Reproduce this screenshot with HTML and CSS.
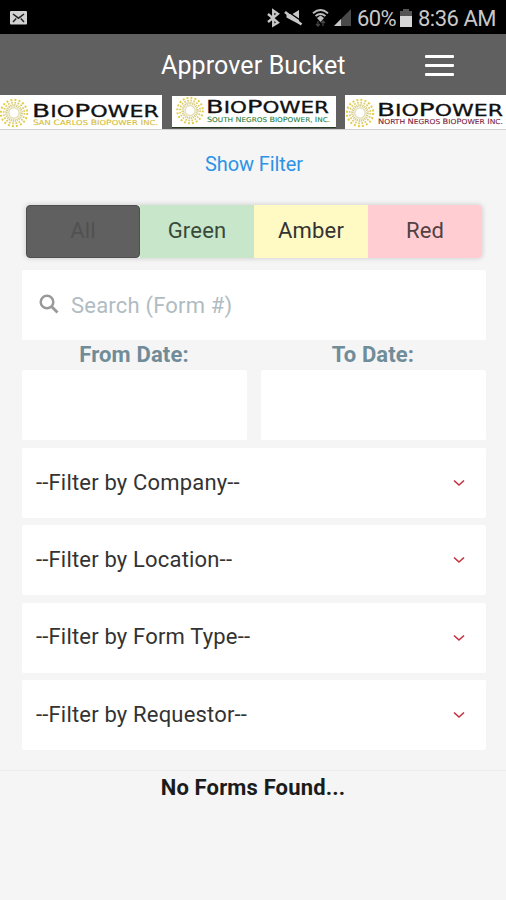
FILE: index.html
```html
<!DOCTYPE html>
<html lang="en">
<head>
<meta charset="utf-8">
<meta name="viewport" content="width=device-width, initial-scale=1">
<title>Approver Bucket</title>
<link rel="stylesheet" href="styles.css">
</head>
<body>
<svg class="defs" width="0" height="0" aria-hidden="true">
  <symbol id="sun" viewBox="-15 -15 30 30">
    <g fill="none">
      <circle r="13.2" stroke="#e3cc45" stroke-width="2" stroke-dasharray="2 2.15"/>
      <circle r="10.4" stroke="#ddcc62" stroke-width="1.8" stroke-dasharray="1.7 1.57"/>
      <circle r="7.6" stroke="#d8cf8d" stroke-width="2.6" stroke-dasharray="1.3 .69"/>
      <circle r="5.2" stroke="#e5dfb8" stroke-width="1.5"/>
    </g>
  </symbol>
  <symbol id="chevron" viewBox="0 0 12 8">
    <path d="M1 1.5 6 6 11 1.5" fill="none" stroke="#c4303c" stroke-width="1.6"/>
  </symbol>
</svg>

<div class="status">
  <svg class="mail" width="17" height="14" viewBox="0 0 17 14">
    <rect width="17" height="13.5" rx="1" fill="#d2d2d2"/>
    <path d="M3 3 8.5 7.2 14 3M3 11 6.2 7.5M14 11 10.8 7.5" fill="none" stroke="#222" stroke-width="1.5"/>
  </svg>
  <svg class="status-icons" width="86" height="20" viewBox="0 0 86 20">
    <path d="M1 6 11 14.500 6.200 17.500V2.500L11 5.800 1 14" fill="none" stroke="#c8c8c8" stroke-width="2.300"/>
    <path d="M19.500 6h6L32 2v14l-7-3.500-5.500-3z" fill="#c8c8c8"/>
    <path d="M20 3 36 14" stroke="#000" stroke-width="1.500"/>
    <path d="M18 4 34.500 16.500" stroke="#c8c8c8" stroke-width="2.600"/>
    <g fill="none" stroke="#bdbdbd" stroke-width="1.900">
      <path d="M46 5.200Q53.500-1 61 5.200M48.500 8Q53.500 4 58.500 8"/>
    </g>
    <path d="m50 10 3.500-2.500L57 10l-3.500 4z" fill="#bdbdbd"/>
    <path d="M51 13v5m-2-2 2 2 2-2M56 18v-5m-2 2 2-2 2 2" fill="none" stroke="#444" stroke-width="1.300"/>
    <path d="M67 18 84 1v17z" fill="#494949"/>
    <path d="M67 18 74 11v7z" fill="#c6c6c6"/>
  </svg>
  <span class="battery-level">60%</span>
  <svg class="battery" width="12" height="18" viewBox="0 0 12 18">
    <path d="M3 0h6v2h3v5H0V2h3z" fill="#555"/>
    <path d="M0 7h12v11H0z" fill="#d6d6d6"/>
  </svg>
  <span class="clock">8:36 AM</span>
</div>

<header class="header">
  <h1 class="title">Approver Bucket</h1>
  <div class="menu"><i></i><i></i><i></i></div>
</header>

<div class="logos">
  <svg class="logo logo-sc" width="162" height="34" viewBox="0 95 162 34">
    <use href="#sun" x="-1" y="98" width="30" height="30"/>
    <text class="word" x="32" y="116.500" textLength="127" lengthAdjust="spacingAndGlyphs">B<tspan class="sm">IO</tspan>P<tspan class="sm">OWER</tspan></text>
    <text class="sub yellow" x="33" y="125" textLength="125" lengthAdjust="spacingAndGlyphs">S<tspan class="ss">AN </tspan>C<tspan class="ss">ARLOS </tspan>B<tspan class="ss">IO</tspan>P<tspan class="ss">OWER </tspan>I<tspan class="ss">NC.</tspan></text>
  </svg>
  <svg class="logo logo-sn" width="164" height="32" viewBox="172 96 164 32">
    <use href="#sun" x="173" y="96" width="30" height="30"/>
    <text class="word" x="204.500" y="114" textLength="127" lengthAdjust="spacingAndGlyphs">B<tspan class="sm">IO</tspan>P<tspan class="sm">OWER</tspan></text>
    <text class="sub green" x="205.500" y="122.500" textLength="127" lengthAdjust="spacingAndGlyphs">S<tspan class="ss">OUTH </tspan>N<tspan class="ss">EGROS </tspan>B<tspan class="ss">IO</tspan>P<tspan class="ss">OWER, </tspan>I<tspan class="ss">NC.</tspan></text>
  </svg>
  <svg class="logo logo-nn" width="161" height="34" viewBox="345 95 161 34">
    <use href="#sun" x="345" y="98" width="30" height="30"/>
    <text class="word" x="377" y="116" textLength="126" lengthAdjust="spacingAndGlyphs">B<tspan class="sm">IO</tspan>P<tspan class="sm">OWER</tspan></text>
    <text class="sub maroon" x="378" y="123.700" textLength="125" lengthAdjust="spacingAndGlyphs">N<tspan class="ss">ORTH </tspan>N<tspan class="ss">EGROS </tspan>B<tspan class="ss">IO</tspan>P<tspan class="ss">OWER </tspan>I<tspan class="ss">NC.</tspan></text>
  </svg>
</div>

<main class="content">
  <a class="show-filter">Show Filter</a>
  <div class="segments">
    <div class="seg all">All</div>
    <div class="seg seg-green">Green</div>
    <div class="seg seg-amber">Amber</div>
    <div class="seg seg-red">Red</div>
  </div>
  <div class="search">
    <svg width="20" height="20" viewBox="0 0 20 20"><circle cx="8" cy="8" r="6.300" fill="none" stroke="#999" stroke-width="2.500"/><path d="m12.500 12.500 6 6" stroke="#999" stroke-width="2.800"/></svg>
    <span>Search (Form #)</span>
  </div>
  <div class="dates">
    <div><div class="date-label">From Date:</div><div class="date-box"></div></div>
    <div><div class="date-label">To Date:</div><div class="date-box"></div></div>
  </div>
  <div class="selects">
    <div class="select"><span>--Filter by Company--</span><svg width="12" height="8"><use href="#chevron"/></svg></div>
    <div class="select"><span>--Filter by Location--</span><svg width="12" height="8"><use href="#chevron"/></svg></div>
    <div class="select"><span>--Filter by Form Type--</span><svg width="12" height="8"><use href="#chevron"/></svg></div>
    <div class="select"><span>--Filter by Requestor--</span><svg width="12" height="8"><use href="#chevron"/></svg></div>
  </div>
</main>
<div class="empty">No Forms Found...</div>
</body>
</html>
```
FILE: styles.css
```css
* { box-sizing: border-box; }
body {
  margin: 0;
  height: 900px;
  overflow: hidden;
  background: #f5f5f5;
  font-family: Roboto, "Liberation Sans", sans-serif;
  font-size: 22px;
  color: #333;
}
svg { display: block; flex: none; }
.defs { position: absolute; }
.status {
  display: flex;
  align-items: center;
  height: 34px;
  padding: 2px 11px 0 10px;
  background: #000;
  color: #c8c8c8;
  font-size: 22px;
  white-space: nowrap;
}
.mail { margin-right: auto; }
.status-icons { margin-right: 4px; }
.battery-level { width: 39px; letter-spacing: -0.6px; }
.battery { margin: 0 6px 0 4px; }
.clock { width: 77px; letter-spacing: -0.5px; }
.header {
  display: flex;
  align-items: center;
  height: 61px;
  padding: 1px 52px 0 161px;
  background: #606060;
}
.title {
  margin: 2px 0 0;
  color: #fff;
  font-size: 25px;
  font-weight: 400;
  line-height: 30px;
  letter-spacing: 0.12px;
  white-space: nowrap;
}
.menu {
  display: flex;
  flex-direction: column;
  gap: 6px;
  width: 29px;
  margin-left: auto;
}
.menu i { height: 3px; border-radius: 1px; background: #fff; }
.logos {
  display: flex;
  justify-content: space-between;
  height: 35px;
  background: #606060;
  border-bottom: 1px solid #d0d0d0;
}
.logo { background: #fff; }
.logo-sn { margin-top: 1px; border-bottom: 1px solid #263a22; }
.word { font: 18.5px "DejaVu Sans", sans-serif; fill: #111; stroke: #111; stroke-width: 0.3px; }
.sm { font-size: 15.5px; }
.sub { font: 7.5px "DejaVu Sans", sans-serif; stroke-width: 0.1px; }
.ss { font-size: 6.8px; }
.yellow { fill: #d6bd35; stroke: #d6bd35; }
.green { fill: #27803a; stroke: #27803a; }
.maroon { fill: #7c2440; stroke: #7c2440; }
.content { padding: 20px 20px 0 22px; }
.show-filter {
  display: block;
  color: #2d93e6;
  font-size: 20px;
  line-height: 28px;
  letter-spacing: -0.1px;
  text-align: center;
}
.segments {
  display: grid;
  grid-template-columns: repeat(4, 1fr);
  height: 53px;
  margin: 27px 4px 0 4px;
  border-radius: 4px;
  box-shadow: 0 0 4px 1px #d4d4d4;
}
.seg {
  display: flex;
  align-items: center;
  justify-content: center;
  padding-bottom: 2px;
  letter-spacing: 0.2px;
}
.all { background: #606060; color: #515151; border: 1px solid #4f4f4f; border-radius: 4px; }
.seg-green { background: #c8e6c9; color: #39493a; }
.seg-amber { background: #fff9c4; }
.seg-red { background: #ffcdd2; color: #514144; border-radius: 0 4px 4px 0; }
.search {
  display: flex;
  align-items: center;
  gap: 12px;
  height: 70px;
  margin-top: 12px;
  padding-left: 17px;
  border-radius: 2px;
  background: #fff;
  color: #b0bcc2;
  letter-spacing: 0.2px;
}
.search svg { margin-top: -2px; }
.dates {
  display: grid;
  grid-template-columns: 1fr 1fr;
  gap: 14px;
}
.date-label {
  height: 30px;
  padding-right: 1px;
  line-height: 29px;
  color: #708c98;
  font-weight: 700;
  letter-spacing: 0.15px;
  text-align: center;
}
.date-box { height: 70px; border-radius: 2px; background: #fff; }
.selects {
  display: flex;
  flex-direction: column;
  gap: 7.4px;
  margin-top: 8px;
}
.select {
  display: flex;
  align-items: center;
  justify-content: space-between;
  height: 70px;
  padding: 0 21px 0 14px;
  border-radius: 2px;
  background: #fff;
  letter-spacing: 0.18px;
}
.select span { margin-top: -2px; }
.empty {
  margin-top: 20px;
  padding-top: 4px;
  border-top: 1px solid #ececec;
  color: #1b1b1b;
  font-weight: 700;
  line-height: 26px;
  letter-spacing: 0.15px;
  text-align: center;
}
```
